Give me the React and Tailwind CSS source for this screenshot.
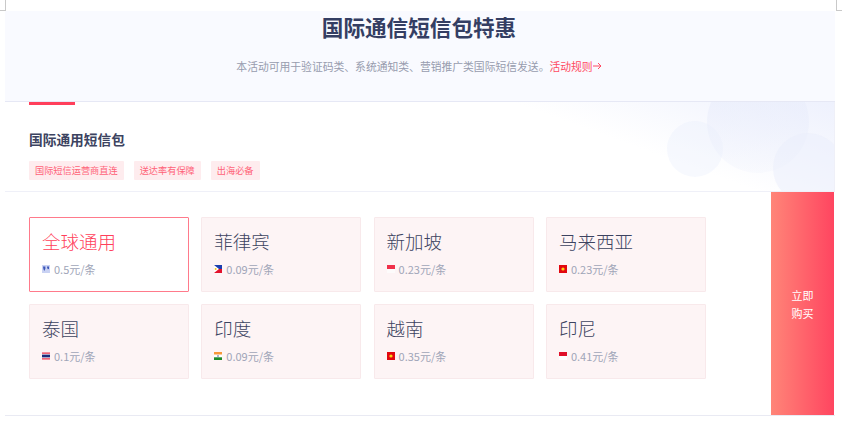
import React from "react";

const font = { fontFamily: '"Noto Sans CJK SC", "Noto Sans", sans-serif' };

function Flag({ code }) {
  if (code === "global") {
    return (
      <svg width="8" height="8" viewBox="0 0 8 8" className="shrink-0">
        <rect width="8" height="8" fill="#c9d2f3" />
        <path d="M1 1.5h2.4v2.2L2.2 6 1.4 4z" fill="#3d57b8" />
        <path d="M5 1.5h2v1.8L6 4.4 5.2 3z" fill="#3d57b8" />
      </svg>
    );
  }
  if (code === "ph") {
    return (
      <svg width="8" height="8" viewBox="0 0 8 8" className="shrink-0">
        <rect width="8" height="4" fill="#1c3fb0" />
        <rect y="4" width="8" height="4" fill="#e3122d" />
        <path d="M0 0l5 4-5 4z" fill="#fff" />
        <circle cx="1.6" cy="4" r="1" fill="#f5c518" />
      </svg>
    );
  }
  if (code === "sg") {
    return (
      <svg width="8" height="8" viewBox="0 0 8 8" className="shrink-0">
        <rect width="8" height="4" fill="#f0304a" />
        <rect y="4" width="8" height="4" fill="#fdfbfb" />
      </svg>
    );
  }
  if (code === "id") {
    return (
      <svg width="8" height="8" viewBox="0 0 8 8" className="shrink-0">
        <rect width="8" height="4" fill="#e0102a" />
        <rect y="4" width="8" height="4" fill="#fff" />
      </svg>
    );
  }
  if (code === "vn") {
    return (
      <svg width="8" height="8" viewBox="0 0 8 8" className="shrink-0">
        <rect width="8" height="8" fill="#e2070f" />
        <circle cx="4" cy="4" r="1.6" fill="#f9d616" />
      </svg>
    );
  }
  if (code === "th") {
    return (
      <svg width="8" height="8" viewBox="0 0 8 8" className="shrink-0">
        <rect width="8" height="8" fill="#fff" />
        <rect y="0.5" width="8" height="1.2" fill="#e8233c" />
        <rect y="2.6" width="8" height="2.8" fill="#1d2a7a" />
        <rect y="6.3" width="8" height="1.2" fill="#e8233c" />
      </svg>
    );
  }
  return (
    <svg width="8" height="8" viewBox="0 0 8 8" className="shrink-0">
      <rect width="8" height="2.7" fill="#f7973a" />
      <rect y="2.7" width="8" height="2.6" fill="#fff" />
      <rect y="5.3" width="8" height="2.7" fill="#1d8a2c" />
      <circle cx="4" cy="4" r="0.8" fill="#44508f" />
    </svg>
  );
}

const plans = [
  { name: "全球通用", price: "0.5元/条", flag: "global", active: true },
  { name: "菲律宾", price: "0.09元/条", flag: "ph" },
  { name: "新加坡", price: "0.23元/条", flag: "sg" },
  { name: "马来西亚", price: "0.23元/条", flag: "vn" },
  { name: "泰国", price: "0.1元/条", flag: "th" },
  { name: "印度", price: "0.09元/条", flag: "in" },
  { name: "越南", price: "0.35元/条", flag: "vn" },
  { name: "印尼", price: "0.41元/条", flag: "id" },
];

function PlanCard({ name, price, flag, active }) {
  return (
    <div
      className={
        active
          ? "h-[74.5px] border border-[#ff7a8b] bg-white pl-[12px] pt-[10px] rounded-[1px]"
          : "h-[74.5px] border border-[#f8e9eb] bg-[#fdf4f5] pl-[12px] pt-[10px] rounded-[1px]"
      }
    >
      <div className={active ? "text-[18.5px] font-light leading-[27px] text-[#ff3f5b]" : "text-[18.5px] font-light leading-[27px] text-[#3c4360]"}>
        {name}
      </div>
      <div className="mt-[6px] flex items-center gap-[4px] text-[11px] leading-[16px] text-[#a0a5b8]">
        <Flag code={flag} />
        <span>{price}</span>
      </div>
    </div>
  );
}

function App() {
  return (
    <div style={font} className="relative h-[422px] w-[842px] overflow-hidden bg-white pl-[5px] pr-[7px] pt-[11px]">
      {/* crop marks */}
      <div className="absolute left-0 top-0 h-[11px] w-[6px] border-b border-r border-[#c9c9c9]"></div>
      <div className="absolute left-[836px] top-0 h-[11px] w-[6px] border-b border-l border-[#c9c9c9]"></div>

      <div className="h-[91px] border-b border-[#e6e8f5] bg-[#f9faff] pr-[2px] text-center">
        <h1 className="text-[21.6px] font-bold leading-[32px] text-[#343e63]">国际通信短信包特惠</h1>
        <p className="mt-[15px] flex items-center justify-center text-[10.8px] leading-[16px] text-[#979cae]">
          <span>本活动可用于验证码类、系统通知类、营销推广类国际短信发送。</span>
          <span className="text-[#ff4a62]">活动规则</span>
          <svg width="9" height="8" viewBox="0 0 9 8" fill="none" stroke="#ff4a62" strokeWidth="1">
            <path d="M0 4h8M5 1l3 3-3 3" />
          </svg>
        </p>
      </div>

      <div className="relative h-[90px] overflow-hidden border-b border-r border-[#eff0f8] bg-[linear-gradient(20deg,#ffffff_70%,#eef1fd_100%)] pl-[24px]">
        <svg width="170" height="90" viewBox="0 0 170 90" className="absolute right-0 top-0">
          <defs>
            <linearGradient id="fade" x1="0" y1="0" x2="0" y2="1">
              <stop offset="0" stopColor="#e9edfb" stopOpacity="0.8" />
              <stop offset="1" stopColor="#e9edfb" stopOpacity="0.2" />
            </linearGradient>
          </defs>
          <circle cx="31" cy="47" r="28" fill="#e9edfb" fillOpacity="0.35" />
          <circle cx="94" cy="20" r="51" fill="url(#fade)" />
          <circle cx="144" cy="66" r="35" fill="#e9edfb" fillOpacity="0.5" />
        </svg>
        <div className="h-[3px] w-[46px] bg-[#ff3f5b]"></div>
        <h2 className="relative mt-[24px] text-[13.7px] font-bold leading-[20px] text-[#3c4360]">国际通用短信包</h2>
        <div className="relative mt-[12px] flex gap-[10px] text-[9.2px] leading-[19px] text-[#ff6378]">
          <span className="rounded-[1px] bg-[#feecee] px-[6px]">国际短信运营商直连</span>
          <span className="rounded-[1px] bg-[#feecee] px-[6px]">送达率有保障</span>
          <span className="rounded-[1px] bg-[#feecee] px-[6px]">出海必备</span>
        </div>
      </div>

      <div className="flex h-[224px] border-b border-[#e9eaf3] pr-[1px]">
        <div className="flex-1 pl-[24px] pt-[25px]">
          <div className="grid w-[677px] grid-cols-[160px_160px_160px_160px] gap-x-[12.3px] gap-y-[12.5px]">
            {plans.map((plan) => (
              <PlanCard key={plan.name} {...plan} />
            ))}
          </div>
        </div>
        <div className="flex w-[63px] flex-col items-center justify-center bg-[linear-gradient(90deg,#ff8578,#ff4560)] text-[11px] leading-[18px] text-white">
          <span>立即</span>
          <span>购买</span>
        </div>
      </div>
    </div>
  );
}

export default App;
